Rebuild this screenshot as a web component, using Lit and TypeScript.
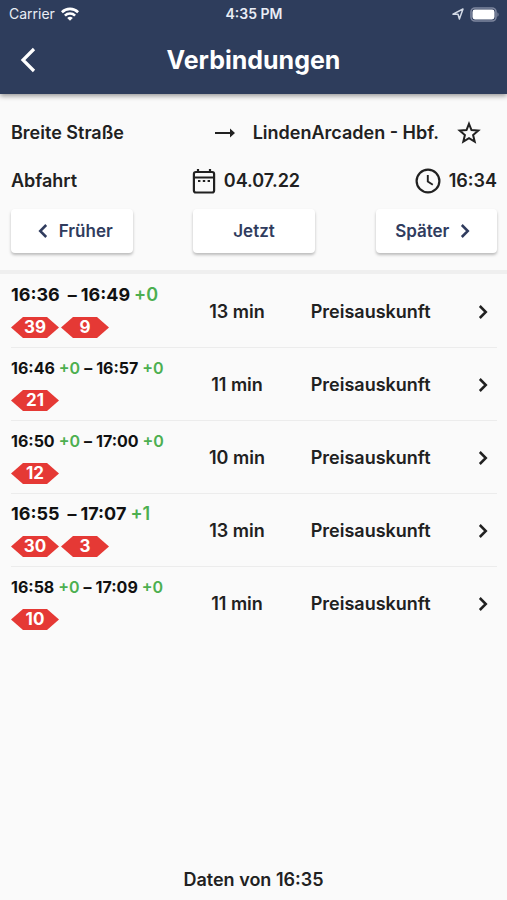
import { LitElement, html, css, svg, nothing } from "lit";
import { customElement, property } from "lit/decorators.js";
import { classMap } from "lit/directives/class-map.js";

interface Connection {
  departure: string;
  departureDelay?: string;
  arrival: string;
  arrivalDelay: string;
  lines: string[];
  duration: string;
}

const CONNECTIONS: Connection[] = [
  { departure: "16:36", arrival: "16:49", arrivalDelay: "+0", lines: ["39", "9"], duration: "13 min" },
  { departure: "16:46", departureDelay: "+0", arrival: "16:57", arrivalDelay: "+0", lines: ["21"], duration: "11 min" },
  { departure: "16:50", departureDelay: "+0", arrival: "17:00", arrivalDelay: "+0", lines: ["12"], duration: "10 min" },
  { departure: "16:55", arrival: "17:07", arrivalDelay: "+1", lines: ["30", "3"], duration: "13 min" },
  { departure: "16:58", departureDelay: "+0", arrival: "17:09", arrivalDelay: "+0", lines: ["10"], duration: "11 min" },
];

const reset = css`
  * {
    box-sizing: border-box;
  }
  button {
    margin: 0;
    padding: 0;
    border: 0;
    background: none;
    color: inherit;
    font: inherit;
    cursor: pointer;
  }
  svg {
    display: block;
    flex: none;
  }
`;

const chevron = (direction: "left" | "right") => svg`
  <svg width="24" height="24" viewBox="0 0 24 24" fill="none" stroke="currentColor" stroke-width="2.5" aria-hidden="true">
    <path d=${direction === "left" ? "M15.2 6 9.200 12l6 6" : "M8.800 6l6 6-6 6"} />
  </svg>
`;

@customElement("status-bar")
export class StatusBar extends LitElement {
  static styles = [
    reset,
    css`
      :host {
        display: grid;
        grid-template-columns: 1fr auto 1fr;
        align-items: center;
        height: 28px;
        padding: 0 8px 0 9px;
        font-size: 14px;
        line-height: 16px;
        color: #e9edf5;
      }
      .carrier,
      .indicators {
        display: flex;
        align-items: center;
        gap: 6px;
      }
      .clock {
        font-weight: 600;
      }
      .indicators {
        justify-content: flex-end;
      }
    `,
  ];

  render() {
    return html`
      <div class="carrier">
        <span>Carrier</span>
        <svg width="18" height="14" viewBox="0 0 18 14" fill="none" stroke="#fff" stroke-width="2.6" aria-hidden="true">
          <path d="M.9 5.2a11.6 11.6 0 0 1 16.2 0" />
          <path d="M3.9 8.6a7.3 7.3 0 0 1 10.2 0" />
          <path d="M9 13.8 6.200 11a4 4 0 0 1 5.600 0z" fill="#fff" stroke="none" />
        </svg>
      </div>
      <div class="clock">4:35 PM</div>
      <div class="indicators">
        <svg width="12" height="12" viewBox="0 0 12 12" fill="none" stroke="#d3dae6" stroke-width="1.5" stroke-linejoin="round" aria-hidden="true">
          <path d="M1 6.2 11 1 7.400 11 6 6.3z" />
        </svg>
        <svg width="29" height="15" viewBox="0 0 29 15" aria-hidden="true">
          <rect x="1" y="1" width="25" height="13" rx="4" fill="none" stroke="#7d869e" stroke-width="1.600" />
          <rect x="2.500" y="2.500" width="22" height="10" rx="2.400" fill="#fff" />
          <path d="M27.400 5.200c1.600.8 1.600 3.800 0 4.600z" fill="#7d869e" />
        </svg>
      </div>
    `;
  }
}

@customElement("line-badge")
export class LineBadge extends LitElement {
  @property() line = "";

  static styles = css`
    :host {
      display: flex;
      justify-content: center;
      width: 48px;
      font-size: 17px;
      line-height: 21px;
      font-weight: 700;
      color: #fff;
      background: #e53935;
      clip-path: polygon(0 50%, 25% 0, 75% 0, 100% 50%, 75% 100%, 25% 100%);
    }
  `;

  render() {
    return html`${this.line}`;
  }
}

@customElement("connection-row")
export class ConnectionRow extends LitElement {
  @property({ attribute: false }) connection!: Connection;

  static styles = [
    reset,
    css`
      :host {
        display: grid;
        grid-template-columns: 34fr 25fr 30fr 11fr;
        align-items: center;
        height: 73px;
      }
      .trip {
        display: flex;
        flex-direction: column;
        gap: 12px;
      }
      .times {
        display: flex;
        gap: 4px;
        font-size: 16px;
        line-height: 20px;
        font-weight: 700;
        color: #111;
        white-space: nowrap;
      }
      .times.large {
        font-size: 18px;
      }
      .times.large .dash {
        padding-left: 4px;
      }
      .delay {
        font-weight: 600;
        color: #4caf50;
      }
      .lines {
        display: flex;
        gap: 2px;
      }
      .duration {
        text-align: center;
      }
      .price {
        justify-self: center;
      }
      .open {
        justify-self: end;
        padding: 8px 2px;
      }
    `,
  ];

  render() {
    const c = this.connection;
    return html`
      <div class="trip">
        <div class=${classMap({ times: true, large: !c.departureDelay })}>
          <span>${c.departure}</span>
          ${c.departureDelay ? html`<span class="delay">${c.departureDelay}</span>` : nothing}
          <span class="dash">–</span>
          <span>${c.arrival}</span>
          <span class="delay">${c.arrivalDelay}</span>
        </div>
        <div class="lines">${c.lines.map((l) => html`<line-badge line=${l}></line-badge>`)}</div>
      </div>
      <div class="duration">${c.duration}</div>
      <button class="price">Preisauskunft</button>
      <button class="open" aria-label="Verbindung öffnen">${chevron("right")}</button>
    `;
  }
}

@customElement("app-root")
export class AppRoot extends LitElement {
  static styles = [
    reset,
    css`
      :host {
        display: flex;
        flex-direction: column;
        min-height: 100vh;
        background: #fafafa;
        color: #212121;
        font-family: Inter, "Liberation Sans", sans-serif;
        font-size: 18px;
        line-height: 24px;
        font-weight: 600;
      }
      .top {
        background: #2e3d5c;
        color: #fff;
        font-weight: 400;
        box-shadow: 0 2px 5px rgba(0, 0, 0, 0.4);
      }
      .title-bar {
        display: grid;
        grid-template-columns: 56px 1fr 56px;
        align-items: center;
        height: 66px;
        padding-bottom: 3px;
      }
      .back {
        justify-self: center;
      }
      h1 {
        margin: 0;
        text-align: center;
        font-size: 25px;
        line-height: 32px;
        font-weight: 700;
      }
      .search {
        display: flex;
        flex-direction: column;
        padding: 20px 10px 17px 11px;
        border-bottom: 4px solid #efefef;
      }
      .route,
      .when,
      .shift {
        display: flex;
        align-items: center;
        justify-content: space-between;
      }
      .route {
        height: 38px;
      }
      .target {
        display: flex;
        align-items: center;
        gap: 18px;
      }
      .favourite {
        margin-right: 16px;
      }
      .when {
        height: 57px;
      }
      .pick {
        display: flex;
        align-items: center;
        gap: 8px;
      }
      .shift button {
        display: flex;
        align-items: center;
        justify-content: center;
        gap: 4px;
        width: 25%;
        height: 44px;
        border-radius: 4px;
        background: #fff;
        color: #303c5e;
        font-size: 17px;
        box-shadow: 0 2px 3px rgba(0, 0, 0, 0.25);
      }
      .results {
        flex: 1;
        margin: 0;
        padding: 1px 10px 0 11px;
        list-style: none;
      }
      .results li + li {
        box-shadow: 0 -1px #ececec;
      }
      footer {
        padding: 8px;
        text-align: center;
      }
    `,
  ];

  render() {
    return html`
      <header class="top">
        <status-bar></status-bar>
        <div class="title-bar">
          <button class="back" aria-label="Zurück">
            <svg width="16" height="26" viewBox="0 0 16 26" fill="none" stroke="#fff" stroke-width="3.2" aria-hidden="true">
              <path d="M14 2 3 13l11 11" />
            </svg>
          </button>
          <h1>Verbindungen</h1>
        </div>
      </header>
      <section class="search">
        <div class="route">
          <span>Breite Straße</span>
          <div class="target">
            <svg width="20" height="10" viewBox="0 0 20 10" aria-hidden="true">
              <path d="M0 3.900h15V.6L20 5l-5 4.400V6.100H0z" fill="#212121" />
            </svg>
            <span>LindenArcaden - Hbf.</span>
            <button class="favourite" aria-label="Als Favorit merken">
              <svg width="24" height="24" viewBox="0 0 24 24" fill="none" stroke="#212121" stroke-width="2" aria-hidden="true">
                <path d="m12 2.800 2.500 6.300 6.800.5-5.200 4.400 1.600 6.600-5.700-3.500-5.700 3.500 1.600-6.600-5.200-4.400 6.800-.5z" />
              </svg>
            </button>
          </div>
        </div>
        <div class="when">
          <span>Abfahrt</span>
          <button class="pick">
            <svg width="24" height="26" viewBox="0 0 24 26" fill="none" stroke="#212121" stroke-width="2.2" aria-hidden="true">
              <rect x="1.900" y="4" width="20.200" height="20.500" rx="2" />
              <path d="M2 9.500h20M6 1v3.500M18 1v3.500" />
              <path d="M6 13h2.400M10.800 13h2.400M15.600 13H18" />
            </svg>
            <span>04.07.22</span>
          </button>
          <button class="pick">
            <svg width="26" height="26" viewBox="0 0 26 26" fill="none" stroke="#212121" stroke-width="2.200" aria-hidden="true">
              <circle cx="13" cy="13" r="11.400" />
              <path d="M12.800 7v6.600l5 3.200" stroke-width="1.900" />
            </svg>
            <span>16:34</span>
          </button>
        </div>
        <div class="shift">
          <button>${chevron("left")}Früher</button>
          <button>Jetzt</button>
          <button>Später${chevron("right")}</button>
        </div>
      </section>
      <ul class="results">
        ${CONNECTIONS.map((c) => html`<li><connection-row .connection=${c}></connection-row></li>`)}
      </ul>
      <footer>Daten von 16:35</footer>
    `;
  }
}
